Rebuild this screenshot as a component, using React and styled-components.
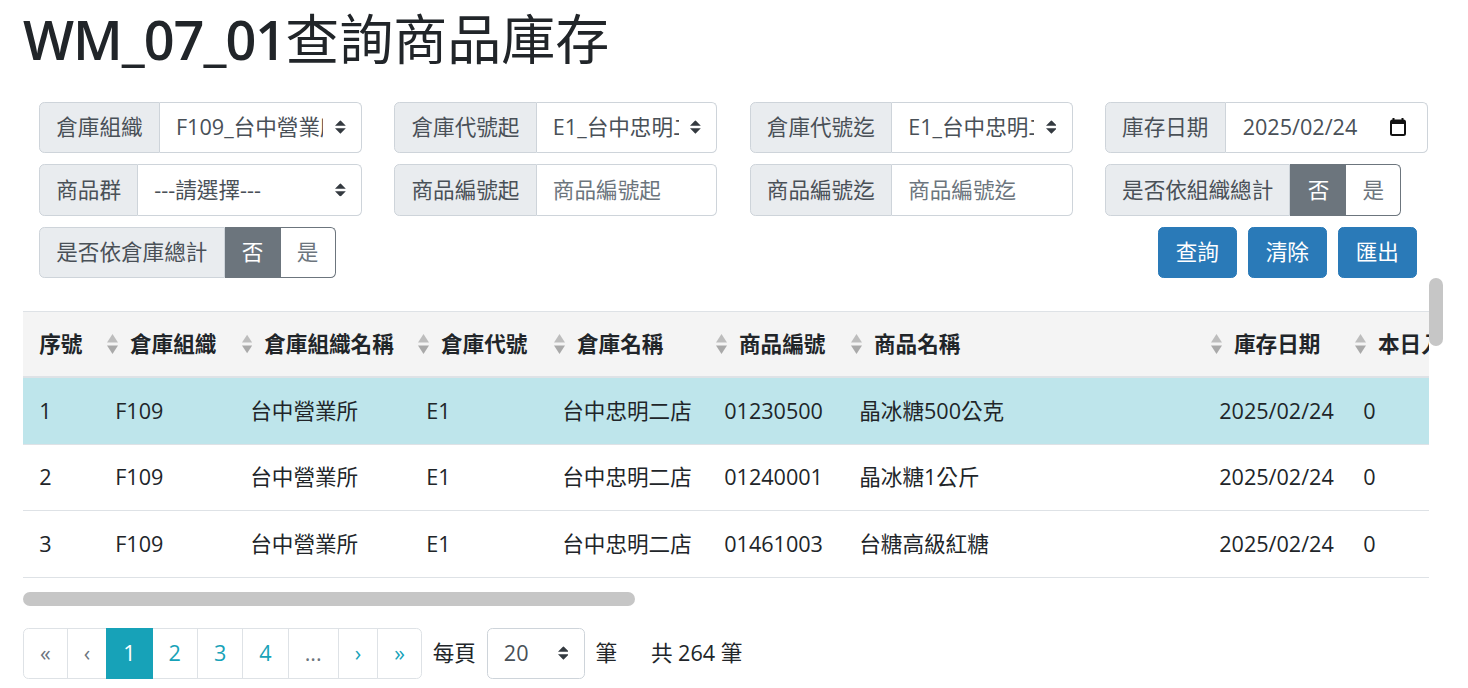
import React from "react";
import styled, { createGlobalStyle } from "styled-components";

const GlobalStyle = createGlobalStyle`
  html, body {
    margin: 0;
    padding: 0;
    overflow: hidden;
    background: #fff;
  }
  body {
    font-family: "Open Sans", "Noto Sans CJK TC", sans-serif;
    font-size: 21.6px;
    line-height: 1.5;
    color: #212529;
  }
  * { box-sizing: border-box; }
`;

const Page = styled.div`
  padding: 7px 25px 0 23px;
`;

const Title = styled.h1`
  margin: 0 0 30px;
  font-size: 54px;
  line-height: 1.2;
  color: #212529;
`;

const TitleCode = styled.span`
  font-weight: 600;
  letter-spacing: -1px;
`;

const TitleName = styled.span`
  font-weight: 400;
`;

const FilterGrid = styled.div`
  display: grid;
  grid-template-columns: repeat(4, 323px);
  column-gap: 32.3px;
  row-gap: 11.2px;
  padding: 0 16px;
`;

const FieldGroup = styled.div`
  display: flex;
  height: 51.3px;
  width: ${(p) => (p.$fit ? "fit-content" : "100%")};
`;

const FieldLabel = styled.span`
  display: flex;
  align-items: center;
  padding: 0 16.2px;
  background: #e9ecef;
  border: 1px solid #ced4da;
  border-radius: 5.4px 0 0 5.4px;
  color: #495057;
  white-space: nowrap;
`;

const SelectWrap = styled.div`
  position: relative;
  flex: ${(p) => (p.$width ? "none" : "1")};
  width: ${(p) => (p.$width ? `${p.$width}px` : "auto")};
  height: 51.3px;
  min-width: 0;
`;

const Select = styled.select`
  appearance: none;
  width: 100%;
  height: 100%;
  padding: 0 37.8px 0 16.2px;
  font: inherit;
  color: #495057;
  background: #fff;
  border: 1px solid #ced4da;
  border-left-width: ${(p) => (p.$standalone ? "1px" : "0")};
  border-radius: ${(p) => (p.$standalone ? "5.4px" : "0 5.4px 5.4px 0")};
  outline: none;
`;

const SelectArrow = styled.svg`
  position: absolute;
  right: 16.2px;
  top: 50%;
  transform: translateY(-50%);
  pointer-events: none;
`;

const TextInput = styled.input`
  flex: 1;
  min-width: 0;
  padding: 0 16.2px;
  font: inherit;
  color: #495057;
  background: #fff;
  border: 1px solid #ced4da;
  border-left: 0;
  border-radius: 0 5.4px 5.4px 0;
  outline: none;

  &::placeholder {
    color: #6c757d;
  }
`;

const DateField = styled.div`
  flex: 1;
  display: flex;
  align-items: center;
  justify-content: space-between;
  padding: 0 21px 0 17px;
  color: #495057;
  background: #fff;
  border: 1px solid #ced4da;
  border-left: 0;
  border-radius: 0 5.4px 5.4px 0;
`;

const ToggleButton = styled.button`
  height: 100%;
  padding: 0 16.2px;
  font: inherit;
  border: 1px solid #6c757d;
  border-left-width: ${(p) => (p.$active ? "1px" : "0")};
  border-radius: ${(p) => (p.$last ? "0 5.4px 5.4px 0" : "0")};
  background: ${(p) => (p.$active ? "#6c757d" : "#fff")};
  color: ${(p) => (p.$active ? "#fff" : "#6c757d")};
`;

const ActionBar = styled.div`
  grid-column: 2 / span 3;
  display: flex;
  justify-content: flex-end;
  gap: 10.8px;
  padding-right: 11px;
`;

const ActionButton = styled.button`
  height: 51.3px;
  padding: 0 17px;
  font: inherit;
  color: #fff;
  background: #2a7ab8;
  border: 1px solid #2a7ab8;
  border-radius: 5.4px;
`;

/* table area: viewport plus drawn scroll bars (the headless browser hides native ones) */
const TableFrame = styled.div`
  display: grid;
  grid-template-columns: 1406px 14px;
  grid-template-rows: 314px 14px;
  width: 1420px;
`;

const TableViewport = styled.div`
  overflow: hidden;
`;

const ScrollTrack = styled.div`
  display: flex;
  flex-direction: ${(p) => (p.$vertical ? "column" : "row")};
`;

const ScrollThumb = styled.div`
  flex: none;
  width: ${(p) => (p.$vertical ? "14px" : `${p.$size}px`)};
  height: ${(p) => (p.$vertical ? `${p.$size}px` : "14px")};
  background: #c6c6c6;
  border-radius: 7px;
`;

const Table = styled.table`
  margin-top: 32.6px;
  border-collapse: collapse;
  table-layout: fixed;
  width: 3230px;
`;

const Col = styled.col`
  width: ${(p) => p.$w}px;
`;

const HeadCell = styled.th`
  padding: 16.2px 16.2px 16.2px ${(p) => (p.$sortable ? "8px" : "16.2px")};
  background: #f4f4f4;
  border-top: 1px solid #dee2e6;
  border-bottom: 2.7px solid #dee2e6;
  text-align: left;
  font-weight: 700;
  white-space: nowrap;
  overflow: hidden;
`;

const HeadInner = styled.div`
  display: flex;
  align-items: center;
  gap: 12px;
`;

const BodyRow = styled.tr`
  background: ${(p) => (p.$selected ? "#bee5eb" : "#fff")};
`;

const Cell = styled.td`
  padding: 16.5px 16.2px;
  border-top: 1px solid #dee2e6;
  white-space: nowrap;
  overflow: hidden;
`;

const PagerRow = styled.div`
  display: flex;
  align-items: center;
  margin-top: 21.6px;
`;

const PageList = styled.ul`
  display: flex;
  margin: 0;
  padding: 0;
  list-style: none;
`;

const PageLink = styled.li`
  padding: 10.8px 16px;
  line-height: 27px;
  height: 51.3px;
  margin-left: -1px;
  border: 1px solid ${(p) => (p.$active ? "#17a2b8" : "#dee2e6")};
  background: ${(p) => (p.$active ? "#17a2b8" : "#fff")};
  color: ${(p) => (p.$active ? "#fff" : p.$muted ? "#6c757d" : "#17a2b8")};
  position: relative;
  z-index: ${(p) => (p.$active ? 1 : 0)};

  &:first-child {
    margin-left: 0;
    border-radius: 5.4px 0 0 5.4px;
  }
  &:last-child {
    border-radius: 0 5.4px 5.4px 0;
  }
`;

const PagerText = styled.span`
  margin: 0 10.8px;
  white-space: nowrap;
`;

const TotalText = styled.span`
  margin-left: 23px;
  white-space: nowrap;
`;

const Arrow = () => (
  <SelectArrow width="10.8" height="13.5" viewBox="0 0 4 5">
    <path d="M2 0L0 2h4zm0 5L0 3h4z" fill="#343a40" />
  </SelectArrow>
);

const SortIcon = () => (
  <svg width="11" height="22" viewBox="0 0 11 22">
    <path d="M5.5 1L11 9.5H0z" fill="#bdbdbd" />
    <path d="M5.5 21L0 12.5h11z" fill="#a9a9a9" />
  </svg>
);

const CalendarIcon = () => (
  <svg width="16" height="18" viewBox="0 0 16 18">
    <path d="M3.5 0v3M12.5 0v3" stroke="#111" strokeWidth="2" />
    <rect x="1" y="2.5" width="14" height="14.5" rx="1.5" fill="none" stroke="#111" strokeWidth="2" />
    <rect x="1" y="2.5" width="14" height="3.5" fill="#111" />
  </svg>
);

function SelectField({ label, value, options }) {
  return (
    <FieldGroup>
      <FieldLabel>{label}</FieldLabel>
      <SelectWrap>
        <Select defaultValue={value}>
          {options.map((o) => (
            <option key={o} value={o}>{o}</option>
          ))}
        </Select>
        <Arrow />
      </SelectWrap>
    </FieldGroup>
  );
}

function InputField({ label }) {
  return (
    <FieldGroup>
      <FieldLabel>{label}</FieldLabel>
      <TextInput placeholder={label} />
    </FieldGroup>
  );
}

function YesNoField({ label }) {
  return (
    <FieldGroup $fit>
      <FieldLabel>{label}</FieldLabel>
      <ToggleButton $active>否</ToggleButton>
      <ToggleButton $last>是</ToggleButton>
    </FieldGroup>
  );
}

const columns = [
  { title: "序號", w: 76 },
  { title: "倉庫組織", w: 135, sort: true },
  { title: "倉庫組織名稱", w: 176, sort: true },
  { title: "倉庫代號", w: 136, sort: true },
  { title: "倉庫名稱", w: 162, sort: true },
  { title: "商品編號", w: 135, sort: true },
  { title: "商品名稱", w: 360, sort: true },
  { title: "庫存日期", w: 144, sort: true },
  { title: "本日入庫量", w: 160, sort: true },
  { title: "本日出庫量", w: 160, sort: true },
  { title: "本日調整量", w: 160, sort: true },
  { title: "本日庫存量", w: 160, sort: true },
  { title: "安全庫存量", w: 160, sort: true },
  { title: "單位", w: 100, sort: true },
  { title: "成本單價", w: 160, sort: true },
  { title: "庫存金額", w: 160, sort: true },
  { title: "最後異動日期", w: 200, sort: true },
  { title: "備註", w: 486, sort: true },
];

const products = [
  ["01230500", "晶冰糖500公克", "包", "32.00", 18],
  ["01240001", "晶冰糖1公斤", "包", "58.00", 12],
  ["01461003", "台糖高級紅糖", "包", "41.00", 9],
  ["01461005", "台糖二號砂糖", "包", "39.00", 15],
  ["01470002", "台糖特砂1公斤", "包", "45.00", 20],
  ["02010010", "台糖沙拉油", "瓶", "95.00", 6],
  ["02020011", "台糖葡萄籽油", "瓶", "199.00", 4],
  ["03010001", "蜆精禮盒", "盒", "650.00", 3],
  ["03010005", "養生蜆精", "瓶", "55.00", 24],
  ["04020003", "台糖礦泉水", "瓶", "12.00", 48],
  ["04020008", "台糖鹼性水", "瓶", "15.00", 36],
  ["05010002", "安心豚里肌", "盒", "129.00", 8],
  ["05010006", "安心豚梅花", "盒", "149.00", 7],
  ["05020001", "安心豚絞肉", "盒", "99.00", 10],
  ["06010004", "台糖蔗糖", "包", "48.00", 14],
  ["06020007", "冰糖250公克", "包", "22.00", 16],
  ["07010001", "台糖洗碗精", "瓶", "69.00", 11],
  ["07010003", "台糖洗衣精", "瓶", "159.00", 5],
  ["08010002", "台糖紅茶", "盒", "85.00", 9],
  ["08010005", "台糖綠茶", "盒", "85.00", 9],
];

const rows = products.map(([code, name, unit, price, stock], i) => [
  String(i + 1),
  "F109",
  "台中營業所",
  "E1",
  "台中忠明二店",
  code,
  name,
  "2025/02/24",
  "0",
  "0",
  "0",
  String(stock),
  "5",
  unit,
  price,
  (parseFloat(price) * stock).toFixed(0),
  "2025/02/20",
  "",
]);

const pages = [
  { label: "«", muted: true },
  { label: "‹", muted: true },
  { label: "1", active: true },
  { label: "2" },
  { label: "3" },
  { label: "4" },
  { label: "...", muted: true },
  { label: "›" },
  { label: "»" },
];

export default function App() {
  return (
    <>
      <GlobalStyle />
      <Page>
        <Title>
          <TitleCode>WM_07_01</TitleCode>
          <TitleName>查詢商品庫存</TitleName>
        </Title>

        <FilterGrid>
          <SelectField label="倉庫組織" value="F109_台中營業所" options={["F109_台中營業所"]} />
          <SelectField label="倉庫代號起" value="E1_台中忠明二店" options={["E1_台中忠明二店"]} />
          <SelectField label="倉庫代號迄" value="E1_台中忠明二店" options={["E1_台中忠明二店"]} />
          <FieldGroup>
            <FieldLabel>庫存日期</FieldLabel>
            <DateField>
              <span>2025/02/24</span>
              <CalendarIcon />
            </DateField>
          </FieldGroup>

          <SelectField label="商品群" value="---請選擇---" options={["---請選擇---"]} />
          <InputField label="商品編號起" />
          <InputField label="商品編號迄" />
          <YesNoField label="是否依組織總計" />

          <YesNoField label="是否依倉庫總計" />
          <ActionBar>
            <ActionButton>查詢</ActionButton>
            <ActionButton>清除</ActionButton>
            <ActionButton>匯出</ActionButton>
          </ActionBar>
        </FilterGrid>

        <TableFrame>
          <TableViewport>
            <Table>
              <colgroup>
                {columns.map((c) => (
                  <Col key={c.title} $w={c.w} />
                ))}
              </colgroup>
              <thead>
                <tr>
                  {columns.map((c) => (
                    <HeadCell key={c.title} $sortable={c.sort}>
                      <HeadInner>
                        {c.sort && <SortIcon />}
                        <span>{c.title}</span>
                      </HeadInner>
                    </HeadCell>
                  ))}
                </tr>
              </thead>
              <tbody>
                {rows.map((r, i) => (
                  <BodyRow key={i} $selected={i === 0}>
                    {r.map((v, j) => (
                      <Cell key={j}>{v}</Cell>
                    ))}
                  </BodyRow>
                ))}
              </tbody>
            </Table>
          </TableViewport>
          <ScrollTrack $vertical>
            <ScrollThumb $vertical $size={68} />
          </ScrollTrack>
          <ScrollTrack>
            <ScrollThumb $size={612} />
          </ScrollTrack>
        </TableFrame>

        <PagerRow>
          <PageList>
            {pages.map((p, i) => (
              <PageLink key={i} $active={p.active} $muted={p.muted}>
                {p.label}
              </PageLink>
            ))}
          </PageList>
          <PagerText>每頁</PagerText>
          <SelectWrap $width={98}>
            <Select $standalone defaultValue="20">
              <option value="10">10</option>
              <option value="20">20</option>
              <option value="50">50</option>
            </Select>
            <Arrow />
          </SelectWrap>
          <PagerText>筆</PagerText>
          <TotalText>共 264 筆</TotalText>
        </PagerRow>
      </Page>
    </>
  );
}
